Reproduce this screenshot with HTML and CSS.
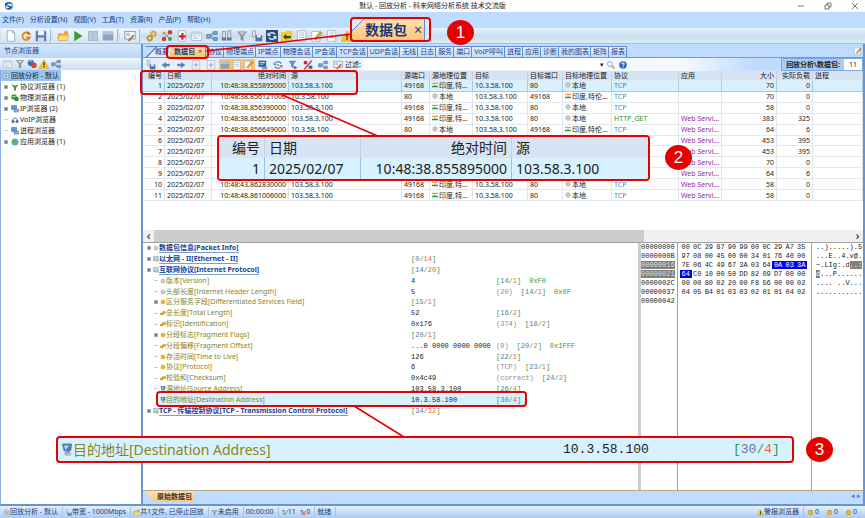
FILE: index.html
```html
<!DOCTYPE html>
<html lang="zh-CN">
<head>
    <meta charset="UTF-8">
    <meta name="viewport" content="width=device-width, initial-scale=1.0">
    <title>默认 - 回放分析 - 科来网络分析系统 技术交流版</title>
    <link rel="stylesheet" href="styles.css">
</head>
<body>
    <svg class="sprite" aria-hidden="true">
        <symbol id="i-logo" viewBox="0 0 16 16"><circle cx="8" cy="8" r="6" fill="#d9ebfa" stroke="#5f97d0" stroke-width="1.6"/><path d="M1 5c3-4 10-4 13 0-4-2-9-1-9 1s8 1 8 4-7 4-11 1c4 1 7 0 7-1S2 8 1 5z" fill="#1d559c"/></symbol>
        <symbol id="i-replay" viewBox="0 0 16 16"><circle cx="8" cy="8" r="6" fill="#c9def4" stroke="#6f9fd2" stroke-width="1.5"/><path d="M6 4l6 4-6 4z" fill="#e39a2c"/></symbol>
        <symbol id="i-new" viewBox="0 0 16 16"><path d="M3 1h7l3 3v11H3z" fill="#fff" stroke="#8a9bb0"/><path d="M10 1v3h3" fill="none" stroke="#8a9bb0"/></symbol>
        <symbol id="i-refresh" viewBox="0 0 16 16"><path d="M12 5a5 5 0 1 0 1 5H8" fill="none" stroke="#e08a1c" stroke-width="2.4"/><path d="M10 1l5 5h-5z" fill="#c65a10"/></symbol>
        <symbol id="i-save" viewBox="0 0 16 16"><path d="M1 1h13l1 2v12H1z" fill="#5b7fae"/><path d="M4 1h8v6H4z" fill="#f4f8fc"/><path d="M4 10h8v5H4z" fill="#cfdff0"/></symbol>
        <symbol id="i-folder" viewBox="0 0 16 16"><path d="M1 4h5l1 1h7v9H1z" fill="#e5b347"/><path d="M3 7h13l-3 7H1z" fill="#fbd97c" stroke="#c99432" stroke-width=".6"/><circle cx="12" cy="4" r="3" fill="#f1a13b"/></symbol>
        <symbol id="i-play" viewBox="0 0 16 16"><path d="M3 1l11 7-11 7z" fill="#3a9a3a"/></symbol>
        <symbol id="i-pause" viewBox="0 0 16 16"><path d="M2 2h5v12H2zM9 2h5v12H9z" fill="#b9cbde" stroke="#93a9c1"/></symbol>
        <symbol id="i-stop" viewBox="0 0 16 16"><path d="M1 2h14v12H1z" fill="#8ba3bf"/><path d="M1 2h14v4H1z" fill="#b4c6da"/></symbol>
        <symbol id="i-edit" viewBox="0 0 16 16"><path d="M1 2h14v10H1z" fill="#f3f6fa" stroke="#7a8797"/><path d="M3 4h5v4H3z" fill="#b9c7d8"/><path d="M5 14l7-8 2 2-7 7z" fill="#a8703c"/></symbol>
        <symbol id="i-gears" viewBox="0 0 16 16"><circle cx="10" cy="5" r="3" fill="none" stroke="#dda52b" stroke-width="2.6"/><circle cx="5" cy="11" r="3" fill="none" stroke="#c7912a" stroke-width="2.6"/></symbol>
        <symbol id="i-nodes" viewBox="0 0 16 16"><path d="M4 4l8 8M12 3l-9 10" stroke="#7a7a7a"/><circle cx="4" cy="4" r="2" fill="#e08c22"/><circle cx="12" cy="3" r="3" fill="#d43a2f"/><circle cx="4" cy="12" r="3" fill="#d43a2f"/><circle cx="12" cy="12" r="2.6" fill="#3f9b45"/></symbol>
        <symbol id="i-plus" viewBox="0 0 16 16"><path d="M3 1h10v14H3z" fill="#fff" stroke="#9aa9bb"/><path d="M7 4h3v3h3v3h-3v3H7v-3H4V7h3z" fill="#dd2222"/></symbol>
        <symbol id="i-window" viewBox="0 0 16 16"><path d="M1 3h13v11H1z" fill="#fafcff" stroke="#9badc2"/><path d="M1 3h13v3H1z" fill="#c4d3e4"/><path d="M3 8h4M3 11h7M9 8h3" stroke="#8fa3ba"/></symbol>
        <symbol id="i-tree" viewBox="0 0 16 16"><path d="M1 6h5v5H1zM10 2h5v4h-5zM10 10h5v4h-5z" fill="#7fa6d2" stroke="#53779f"/><path d="M6 8h2V4h2M8 8v4h2" fill="none" stroke="#53779f"/></symbol>
        <symbol id="i-tube" viewBox="0 0 16 16"><path d="M2 2h4v9H2zM9 1h4v11H9z" fill="#d8e1ea" stroke="#7c8da0"/><path d="M1 10h6v4H1zM8 10h6v4H8z" fill="#5e7a9c"/></symbol>
        <symbol id="i-funnel" viewBox="0 0 16 16"><path d="M1 2h14l-5 6v7l-4-2V8z" fill="#8b949e"/><path d="M4 3h8l-4 4z" fill="#c9ced4"/></symbol>
        <symbol id="i-disk" viewBox="0 0 16 16"><path d="M2 1h4v8H2z" fill="#e0e7ee" stroke="#8a98a8"/><path d="M6 7h9v8H6z" fill="#4f73a5"/><path d="M8 7h5v3H8z" fill="#eef3f8"/></symbol>
        <symbol id="i-sync" viewBox="0 0 16 16"><path d="M0 0h16v16H0z" fill="#2b4c7c"/><path d="M12 6a4.500 4.500 0 0 0-8 0M4 10a4.500 4.500 0 0 0 8 0" fill="none" stroke="#dfe9f5" stroke-width="2"/><path d="M2 3v5h5zM14 13V8H9z" fill="#dfe9f5"/></symbol>
        <symbol id="i-note" viewBox="0 0 16 16"><path d="M0 3h6l1-2h8v14H0z" fill="#f5cf1e"/><path d="M3 9l4-4v3h6v3H7v2z" fill="#283e5b"/></symbol>
        <symbol id="i-doc" viewBox="0 0 16 16"><path d="M2 1h11v14H2z" fill="#fff" stroke="#9dadbf"/><path d="M4 4h7M4 7h7M4 10h7" stroke="#8fa8c4"/></symbol>
        <symbol id="i-expand" viewBox="0 0 16 16"><path d="M2 1h12v14H2z" fill="#eef4fb" stroke="#9dadbf"/><path d="M8 4v8M4 8h8" stroke="#8fa8c4" stroke-width="1.5"/></symbol>
        <symbol id="i-pen" viewBox="0 0 16 16"><path d="M1 2h11v13H1z" fill="#fff" stroke="#9dadbf"/><path d="M4 12l8-10 3 2-8 9z" fill="#e0a146" stroke="#8c6a3b" stroke-width=".6"/></symbol>
        <symbol id="i-warn" viewBox="0 0 16 16"><path d="M8 1l8 14H0z" fill="#f8c51b" stroke="#c99110" stroke-width=".6"/><path d="M7 5h2v5H7zM7 11h2v2H7z" fill="#3b3000"/></symbol>
        <symbol id="i-left" viewBox="0 0 16 16"><path d="M1 8l7-5v3h6v4H8v3z" fill="#5f82b0"/></symbol>
        <symbol id="i-right" viewBox="0 0 16 16"><path d="M15 8L8 3v3H2v4h6v3z" fill="#5f82b0"/></symbol>
        <symbol id="i-screen" viewBox="0 0 16 16"><path d="M1 1h12v10H1z" fill="#2f5f9f"/><path d="M3 3h8v2H3zM3 7h6v1H3z" fill="#cfe0f3"/><path d="M6 11h9v4H6z" fill="#7c9cc4"/></symbol>
        <symbol id="i-swap" viewBox="0 0 16 16"><path d="M13 6a5 5 0 0 0-9-1M3 10a5 5 0 0 0 9 1" fill="none" stroke="#4c86c6" stroke-width="2"/><path d="M1 3v5h5zM15 13V8h-5z" fill="#4c86c6"/><circle cx="8" cy="8" r="2" fill="#e0a53a"/></symbol>
        <symbol id="i-filter" viewBox="0 0 16 16"><path d="M1 1h12L9 7v6L5 11V7z" fill="#5c93c9"/><path d="M9 9l6 3-5 3z" fill="#3c6a9e"/></symbol>
        <symbol id="i-ball" viewBox="0 0 16 16"><circle cx="6" cy="6" r="5" fill="#2f6dc0"/><circle cx="11" cy="10" r="4.500" fill="#d8472c"/><path d="M3 4q3-3 5 0" stroke="#cfe3fa" fill="none" stroke-width="1.500"/></symbol>
        <symbol id="i-percent" viewBox="0 0 16 16"><path d="M2 15L14 1" stroke="#d12626" stroke-width="2.400"/><circle cx="4" cy="4" r="3" fill="#d12626"/><path d="M9 9h6v5H9z" fill="#35619b"/></symbol>
        <symbol id="i-search" viewBox="0 0 16 16"><circle cx="6" cy="6" r="5" fill="#f4faff" stroke="#8199b3" stroke-width="1.600"/><path d="M10 10l5 5" stroke="#c98f2b" stroke-width="3"/></symbol>
        <symbol id="i-help" viewBox="0 0 16 16"><circle cx="8" cy="8" r="7.500" fill="#2d67b5"/><path d="M5.500 6q0-2.500 2.500-2.500t2.500 2.300Q10.500 7.500 8 9v1M8 11.500v2" fill="none" stroke="#fff" stroke-width="2"/></symbol>
        <symbol id="i-globe" viewBox="0 0 16 16"><circle cx="8" cy="8" r="7" fill="#5aa8dc"/><path d="M3 4q5-3 7 1t-3 4-5 1zM9 10l5-1-2 4z" fill="#69b04b"/></symbol>
        <symbol id="i-chat" viewBox="0 0 16 16"><circle cx="6" cy="6" r="5.500" fill="#3da03a"/><circle cx="11" cy="10" r="4.500" fill="#2f8a34"/><path d="M3 5h6" stroke="#d5f2cf" stroke-width="1.500"/></symbol>
        <symbol id="i-pc" viewBox="0 0 16 16"><path d="M1 1h10v8H1z" fill="#5d9bd8" stroke="#41658f"/><path d="M6 8h9v6H6z" fill="#8bb7e2" stroke="#41658f"/></symbol>
        <symbol id="i-phone" viewBox="0 0 16 16"><path d="M3 10a5 6 0 0 1 10 0" fill="none" stroke="#5d86b3" stroke-width="2"/><circle cx="4" cy="11" r="3" fill="#3c6ea8"/><circle cx="12" cy="11" r="3" fill="#3c6ea8"/></symbol>
        <symbol id="i-proto" viewBox="0 0 16 16"><path d="M1 2l5 3h4l5-3-3 6-2 1v6H6V9L4 8z" fill="#4d8f4d"/></symbol>
        <symbol id="i-india" viewBox="0 0 16 16"><path d="M0 2h16v4H0z" fill="#f39a3a"/><path d="M0 6h16v4H0z" fill="#fff"/><path d="M0 10h16v4H0z" fill="#2f9440"/><circle cx="8" cy="8" r="1.500" fill="#3553a0"/></symbol>
        <symbol id="i-local" viewBox="0 0 16 16"><circle cx="8" cy="8" r="6.500" fill="#d3d3d3" stroke="#9b9b9b"/><path d="M2 8h12M8 2v12" stroke="#a9a9a9"/></symbol>
        <symbol id="i-gray" viewBox="0 0 16 16"><circle cx="8" cy="8" r="5" fill="#d4d4d4" stroke="#8d8d8d" stroke-width="1.500"/></symbol>
        <symbol id="i-gold" viewBox="0 0 16 16"><circle cx="8" cy="8" r="5.500" fill="#f3b42b" stroke="#b37c12"/></symbol>
        <symbol id="i-key" viewBox="0 0 16 16"><path d="M1 8h7v5H1zM7 4h8v5H7z" fill="#e6ac2c" stroke="#a87a18"/></symbol>
        <symbol id="i-layer" viewBox="0 0 16 16"><path d="M1 1h13v12H1z" fill="#9cc3ee" stroke="#5f8ec4"/><path d="M3 4h9M3 7h9" stroke="#fff"/><path d="M9 9h6v6H9z" fill="#f0b93b"/></symbol>
        <symbol id="i-host" viewBox="0 0 16 16"><path d="M2 0h12l-1 9H4z" fill="#3d7cc4" stroke="#5c6f86"/><path d="M4 2h7L6 8z" fill="#bcdcf8"/><path d="M6 9h6l-1 3H6z" fill="#8795a8"/><path d="M4 12h9v3H6z" fill="#bfc9d5" stroke="#77879a" stroke-width=".6"/></symbol>
        <symbol id="i-check" viewBox="0 0 16 16"><path d="M1 2h9l-3 5v6L5 12V7z" fill="#8f9aa6"/><path d="M6 9l3 4 6-10" stroke="#3ba23b" stroke-width="2" fill="none"/></symbol>
        <symbol id="i-cross" viewBox="0 0 16 16"><path d="M1 2h9l-3 5v6L5 12V7z" fill="#8f9aa6"/><path d="M8 5l6 9M14 5l-6 9" stroke="#d9402e" stroke-width="2"/></symbol>
    </svg>

    <div class="app">
        <header class="titlebar">
            <svg class="logo"><use href="#i-logo"/></svg>
            <h1>默认 - 回放分析 - 科来网络分析系统 技术交流版</h1>
            <div class="window-buttons">
                <button aria-label="最小化"><svg viewBox="0 0 8 8"><path d="M1 4h6"/></svg></button>
                <button aria-label="还原"><svg viewBox="0 0 8 8"><path d="M1 3h4v4H1zM3 3V1h4v4H5"/></svg></button>
                <button aria-label="关闭"><svg viewBox="0 0 8 8"><path d="M1 1l6 6M7 1L1 7"/></svg></button>
            </div>
        </header>

        <nav class="menubar">
            <button>文件(F)</button>
            <button>分析设置(N)</button>
            <button>视图(V)</button>
            <button>工具(T)</button>
            <button>资源(R)</button>
            <button>产品(P)</button>
            <button>帮助(H)</button>
        </nav>

        <div class="toolbar" id="main-toolbar"></div>

        <main class="workspace">
            <aside class="sidebar">
                <h2>节点浏览器</h2>
                <div class="side-tools" id="side-tools"></div>
                <ul class="nodes" id="nodes"></ul>
            </aside>

            <section class="content">
                <div class="tabs" id="tabs"></div>

                <div class="packet-tools">
                    <div class="tool-list" id="packet-tools"></div>
                    <label for="filter">过滤:</label>
                    <input id="filter" type="text">
                    <button class="drop" aria-label="历史">▾</button>
                    <button class="tool" aria-label="搜索"><svg><use href="#i-search"/></svg></button>
                    <button class="tool" aria-label="说明"><svg><use href="#i-help"/></svg></button>
                    <div class="counter"><b>回放分析\数据包:</b><span>11</span></div>
                </div>

                <div class="packets">
                    <table>
                        <colgroup>
                            <col class="c-no"><col class="c-date"><col class="c-time"><col class="c-src"><col class="c-sport">
                            <col class="c-sgeo"><col class="c-dst"><col class="c-dport"><col class="c-dgeo"><col class="c-proto">
                            <col class="c-app"><col class="c-size"><col class="c-load"><col>
                        </colgroup>
                        <thead>
                            <tr>
                                <th class="num">编号</th><th>日期</th><th class="num">绝对时间</th><th>源</th><th>源端口</th>
                                <th>源地理位置</th><th>目标</th><th>目标端口</th><th>目标地理位置</th><th>协议</th>
                                <th>应用</th><th class="num">大小</th><th class="num">实际负载</th><th>进程</th>
                            </tr>
                        </thead>
                        <tbody id="packet-rows"></tbody>
                    </table>
                </div>
                <div class="scrollbar"><span>‹</span><i></i><span>›</span></div>

                <div class="detail">
                    <div class="fields" id="fields"></div>
                    <div class="hex" id="hex"></div>
                </div>

                <div class="bottom-tabs">
                    <button>原始数据包</button>
                    <span>◂ ▸</span>
                </div>
            </section>
        </main>

        <footer class="statusbar">
            <span><svg><use href="#i-replay"/></svg>回放分析 - 默认</span>
            <span><svg><use href="#i-disk"/></svg>带宽 - 1000Mbps</span>
            <span><svg><use href="#i-folder"/></svg>共1文件, 已停止回放</span>
            <span><svg><use href="#i-funnel"/></svg>未启用</span>
            <span>00:00:00</span>
            <span><svg><use href="#i-check"/></svg>11 &nbsp;<svg><use href="#i-cross"/></svg>0</span>
            <span>就绪</span>
            <span class="alarm"><svg><use href="#i-warn"/></svg>警报浏览器</span>
            <span class="level"><svg><use href="#i-gold"/></svg>0</span>
            <span class="level"><svg><use href="#i-gold"/></svg>0</span>
            <span class="level"><svg><use href="#i-gold"/></svg>0</span>
        </footer>
    </div>

    <!-- annotations over the window -->
    <div class="notes">
        <svg class="links" viewBox="0 0 865 518">
            <path d="M206 51L352 34M280 94L380 137M354 406L404 437"/>
        </svg>
        <div class="frame frame-tab"></div>
        <div class="frame frame-row"></div>
        <div class="frame frame-field"></div>

        <div class="frame zoom-tab"><b>数据包</b><span>×</span></div>
        <div class="frame zoom-row">
            <div class="zoom-head"><span>编号</span><span>日期</span><span>绝对时间</span><span>源</span></div>
            <div class="zoom-data"><span>1</span><span>2025/02/07</span><span>10:48:38.855895000</span><span>103.58.3.100</span></div>
        </div>
        <div class="frame zoom-field">
            <svg><use href="#i-host"/></svg>
            <span class="zoom-name">目的地址[Destination Address]</span>
            <span class="zoom-value">10.3.58.100</span>
            <span class="zoom-pos"><em>[</em>30<em>/</em><i>4</i><em>]</em></span>
        </div>

        <div class="badge badge-1">1</div>
        <div class="badge badge-2">2</div>
        <div class="badge badge-3">3</div>
    </div>

    <script>
        const byId = id => document.getElementById(id);
        const icon = name => `<svg><use href="#i-${name}"/></svg>`;
        const tool = name => `<button class="tool" aria-label="${name}">${icon(name)}</button>`;

        const mainGroups = [
            ['new', 'refresh', 'save'],
            ['folder', 'play', 'pause', 'stop'],
            ['edit'],
            ['gears', 'nodes', 'plus', 'window', 'tree', 'tube', 'funnel', 'disk', 'sync', 'note', 'doc', 'pen', 'doc', 'warn']
        ];
        byId('main-toolbar').innerHTML = mainGroups.map(g => `<div class="group">${g.map(tool).join('')}</div>`).join('');

        byId('side-tools').innerHTML = ['window', 'funnel', 'ball', 'warn', 'tree'].map(tool).join('');

        byId('packet-tools').innerHTML =
            ['disk', 'left', 'right', 'expand', 'expand'].map(tool).join('') +
            `<div class="pressed">${['stop', 'doc', 'pen'].map(tool).join('')}</div>` +
            ['screen', 'swap', 'filter', 'percent', 'tree', 'edit'].map(tool).join('');

        const nodes = [
            ['proto', '协议浏览器 (1)', true],
            ['chat', '物理浏览器 (1)', true],
            ['pc', 'IP浏览器 (2)', true],
            ['phone', 'VoIP浏览器', false],
            ['pc', '进程浏览器', false],
            ['globe', '应用浏览器 (1)', true]
        ];
        byId('nodes').innerHTML = `<li class="root">${icon('replay')}回放分析 - 默认</li>` +
            nodes.map(([i, text, open]) => `<li><i class="${open ? 'box' : 'dash'}"></i>${icon(i)}${text}</li>`).join('');

        const tabs = ['概要', '数据包', '协议', '物理端点', 'IP端点', '物理会话', 'IP会话', 'TCP会话', 'UDP会话', '无线', '日志',
            '服务', '端口', 'VoIP呼叫', '进程', '应用', '诊断', '我的图表', '矩阵', '报表'];
        byId('tabs').innerHTML = tabs.map((t, i) =>
            i === 1 ? `<button class="active">${t}<span>×</span></button>` : `<button>${t}</button>`
        ).join('') + icon('pen');

        // time, outgoing, protocol, size, payload
        const packets = [
            ['10:48:38.855895000', 1, 'TCP', 70, 0],
            ['10:48:38.856121000', 0, 'TCP', 70, 0],
            ['10:48:38.856390000', 1, 'TCP', 58, 0],
            ['10:48:38.856550000', 1, 'HTTP_GET', 383, 325],
            ['10:48:38.856649000', 0, 'TCP', 64, 6],
            ['', 0, '', 453, 395],
            ['', 0, '', 453, 395],
            ['', 0, '', 70, 0],
            ['', 0, '', 64, 6],
            ['10:48:43.862830000', 1, 'TCP', 58, 0],
            ['10:48:48.861006000', 1, 'TCP', 58, 0]
        ];
        const route = out => {
            const local = icon('local') + '本地';
            return out
                ? ['103.58.3.100', 49168, icon('india') + '印度,特...', '10.3.58.100', 80, local]
                : ['10.3.58.100', 80, local, '103.58.3.100', 49168, icon('india') + '印度,特伦...'];
        };
        byId('packet-rows').innerHTML = packets.map(([time, out, proto, size, load], i) => {
            const hosts = time ? route(out) : Array(6).fill('');
            return `<tr class="${i === 0 ? 'selected' : ''}">
                <td class="num">${i + 1}</td><td>2025/02/07</td><td class="num">${time}</td>
                ${hosts.map(h => `<td>${h}</td>`).join('')}
                <td class="${proto === 'TCP' ? 'tcp' : 'http'}">${proto}</td><td class="web">${i > 2 ? 'Web Servi...' : ''}</td>
                <td class="num">${size}</td><td class="num">${load}</td><td></td>
            </tr>`;
        }).join('');

        // level, icon, name, value, note, position, mask
        const fields = [
            [0, 'gray', '数据包信息[Packet Info]', '', '', '', '', 'box'],
            [0, 'layer', '以太网 - II[Ethernet - II]', '', '', '0/14', '', 'box'],
            [0, 'layer', '互联网协议[Internet Protocol]', '', '', '14/20', '', 'box'],
            [1, 'gray', '版本[Version]', '4', '', '14/1', '0xF0', 'dash'],
            [1, 'gray', '头部长度[Internet Header Length]', '5', '(20)', '14/1', '0x0F', 'dash'],
            [1, 'gold', '区分服务字段[Differentiated Services Field]', '', '', '15/1', '', 'box'],
            [1, 'key', '总长度[Total Length]', '52', '', '16/2', '', 'dash'],
            [1, 'key', '标识[Identification]', '0x176', '(374)', '18/2', '', 'dash'],
            [1, 'gold', '分段标志[Fragment Flags]', '', '', '20/1', '', 'box'],
            [1, 'key', '分段偏移[Fragment Offset]', '...0 0000 0000 0000', '(0)', '20/2', '0x1FFF', 'dash'],
            [1, 'gold', '存活时间[Time to Live]', '126', '', '22/1', '', 'dash'],
            [1, 'gold', '协议[Protocol]', '6', '(TCP)', '23/1', '', 'dash'],
            [1, 'key', '校验和[Checksum]', '0x4c49', '(correct)', '24/2', '', 'dash'],
            [1, 'host', '源地址[Source Address]', '103.58.3.100', '', '26/4', '', 'dash'],
            [1, 'host', '目的地址[Destination Address]', '10.3.58.100', '', '30/4', '', 'dash'],
            [0, 'layer', 'TCP - 传输控制协议[TCP - Transmission Control Protocol]', '', '', '34/32', '', 'box']
        ];
        const position = p => {
            if (!p) return '';
            const [from, len] = p.split('/');
            return `<span class="pos"><em>[</em>${from}<em>/</em><i>${len}</i><em>]</em></span>`;
        };
        byId('fields').innerHTML = fields.map(([level, ic, name, value, note, pos, mask, mark], i) => `
            <div class="field level-${level} ${i === 14 ? 'selected' : ''}">
                <span class="name"><i class="${mark}"></i>${icon(ic)}<a href="#fields">${name}</a></span>
                <span class="value">${value || position(pos)}</span>
                <span class="extra">${note ? `<span class="gray">${note}</span>` : ''}${value ? position(pos) : ''}${mask ? `<em>${mask}</em>` : ''}</span>
            </div>`).join('');

        const dump = [
            ['00000000', '00 0C 29 87 90 99 00 0C 29 A7 35', '..).....).5'],
            ['0000000B', '97 08 00 45 00 00 34 01 76 40 00', '...E..4.v@.'],
            ['00000016', '7E 06 4C 49 67 3A 03 64 0A 03 3A', '~.LIg:.d..:'],
            ['00000021', '64 C0 10 00 50 DD 82 09 D7 00 00', 'd...P......'],
            ['0000002C', '00 00 80 02 20 00 F8 56 00 00 02', '.... ..V...'],
            ['00000037', '04 05 B4 01 03 03 02 01 01 04 02', '...........'],
            ['00000042', '', '']
        ];
        const marked = n => n >= 30 && n <= 33;
        byId('hex').innerHTML =
            `<div class="offsets">${dump.map((r, i) => `<span class="${i === 2 || i === 3 ? 'on' : ''}">${r[0]}</span>`).join('')}</div>` +
            `<div class="bytes">${dump.map((r, i) => r[1] ? r[1].split(' ').map((b, j) =>
                `<span class="${marked(i * 11 + j) ? 'on' : ''}">${b}</span>`).join('') : '').join('')}</div>` +
            `<div class="ascii">${dump.map((r, i) => `<p>${[...r[2]].map((c, j) =>
                marked(i * 11 + j) ? `<span class="on">${c}</span>` : c).join('')}</p>`).join('')}</div>`;
    </script>
</body>
</html>
```
FILE: styles.css
```css
* {
    box-sizing: border-box;
}
body {
    margin: 0;
    font-family: "Noto Sans", "Noto Sans CJK SC", sans-serif;
    font-size: 7px;
    line-height: 10px;
    color: #222;
    background: #bfdbff;
}
button, input {
    font: inherit;
    color: inherit;
    margin: 0;
    padding: 0;
    border: 0;
    background: none;
}
h1, h2, p, ul {
    margin: 0;
    padding: 0;
    font-size: 7px;
    font-weight: normal;
}
svg {
    width: 8px;
    height: 8px;
    flex: none;
}
em, i {
    font-style: normal;
}
.sprite {
    position: absolute;
    width: 0;
    height: 0;
}
.app {
    height: 100vh;
    display: flex;
    flex-direction: column;
    overflow: hidden;
}

/* title, menu and toolbar */
.titlebar {
    height: 12px;
    display: grid;
    grid-template-columns: 1fr auto 1fr;
    align-items: center;
    padding: 0 4px;
    background: #fff;
}
.titlebar .logo {
    width: 10px;
    height: 10px;
}
.window-buttons {
    display: flex;
    justify-content: flex-end;
    gap: 19px;
    padding-right: 2px;
}
.window-buttons button {
    display: flex;
}
.window-buttons path {
    fill: none;
    stroke: #555;
    stroke-width: 0.8;
}
.menubar {
    height: 16px;
    display: flex;
    align-items: center;
    gap: 6px;
    padding: 0 2px;
    color: #1c3f7c;
    background: #bfdbff;
}
.toolbar {
    height: 16px;
    display: flex;
    gap: 2px;
    padding: 0 1px;
    border-top: 1px solid #e6f1fc;
    border-bottom: 1px solid #9fc0e4;
    background: linear-gradient(#e4f0fb, #c9ddef 50%, #dcecf9);
}
.group {
    display: flex;
    align-items: center;
    padding: 0 2px;
    border-right: 1px solid #9dbfe6;
    background: linear-gradient(#eef5fc, #d4e4f4);
}
.group:last-child {
    flex: 1;
    border: 0;
    background: none;
}
.tool {
    width: 12px;
    height: 12px;
    display: flex;
    align-items: center;
    justify-content: center;
}
.group .tool {
    width: 15px;
}
.group svg {
    width: 12px;
    height: 12px;
}

/* sidebar */
.workspace {
    flex: 1;
    min-height: 0;
    display: grid;
    grid-template-columns: 143px 1fr;
}
.sidebar {
    display: flex;
    flex-direction: column;
    border-right: 2px solid #6a94d0;
    border-bottom: 2px solid #6a94d0;
}
.sidebar h2 {
    height: 14px;
    padding-left: 4px;
    line-height: 14px;
    color: #1f437d;
    background: linear-gradient(#d5e7fc, #bad6f8);
}
.side-tools {
    height: 12px;
    display: flex;
    align-items: center;
    padding-left: 2px;
    background: linear-gradient(#f0f6fd, #c8dcf4);
}
.side-tools svg {
    width: 10px;
    height: 10px;
}
.nodes {
    flex: 1;
    list-style: none;
    border-left: 1px solid #86ace0;
    background: #fff;
}
.nodes li {
    display: flex;
    align-items: center;
    gap: 1px;
    height: 11px;
    padding-left: 3px;
}
.nodes .root {
    width: 60px;
    padding-left: 1px;
    background: #98c3f4;
    white-space: nowrap;
}
.box, .dash {
    width: 4px;
    height: 4px;
    margin-right: 2px;
    flex: none;
    border: 1px solid #aab1b9;
    background: #6d747c;
}
.dash {
    height: 1px;
    border-width: 1px 0 0;
    border-color: #ccc;
}

/* tabs and packet toolbar */
.content {
    min-width: 0;
    display: flex;
    flex-direction: column;
    border-right: 2px solid #6a94d0;
    border-bottom: 2px solid #6a94d0;
}
.tabs {
    height: 14px;
    display: flex;
    align-items: flex-end;
    padding: 0 1px 0 3px;
    border-bottom: 1px solid #6f9bd6;
    background: #bfdbff;
}
.tabs button {
    height: 11px;
    padding: 0 1px 0 2px;
    border: 1px solid #5f8ccc;
    border-width: 1px 1px 0 0;
    color: #1c3f7c;
    background: linear-gradient(#e6f1ff, #c2dbfa);
    white-space: nowrap;
}
.tabs button:first-child {
    padding-left: 9px;
    background: linear-gradient(135deg, #bfdbff 7px, #5f8ccc 7px, #5f8ccc 8px, #deebfc 8px);
    border-width: 1px 0 0;
}
.tabs .active {
    padding: 0 3px 0 4px;
    font-weight: bold;
    background: linear-gradient(#ffe0a8, #fdc06a);
}
.tabs .active span {
    padding-left: 3px;
    font-weight: normal;
}
.tabs svg {
    margin-left: auto;
    margin-bottom: 2px;
}
.packet-tools {
    height: 13px;
    display: flex;
    align-items: center;
    background: linear-gradient(90deg, #e3effc, #f4f9ff 75%, #bfdbff 85%);
}
.tool-list {
    display: flex;
    align-items: center;
    gap: 1px;
    margin-left: 1px;
}
.tool-list .tool {
    width: 14px;
}
.tool-list svg {
    width: 10px;
    height: 10px;
}
.tool-list .pressed {
    display: flex;
    background: #fbc268;
}
.pressed .tool {
    width: 12px;
}
.packet-tools input {
    width: 236px;
    height: 11px;
    margin-left: 2px;
    background: #fff;
}
.drop {
    width: 6px;
    line-height: 8px;
    background: #fff;
}
.counter {
    display: flex;
    margin-left: auto;
    line-height: 11px;
    border: 1px solid #7ea7de;
    background: #a9cbf5;
}
.counter b {
    padding: 0 4px;
}
.counter span {
    width: 18px;
    text-align: center;
    background: #fff;
}

/* packet list */
.packets {
    height: 159px;
    flex: none;
    overflow: hidden;
    background: #fff;
}
.packets table {
    width: 100%;
    height: 130px;
    table-layout: fixed;
    border-collapse: separate;
    border-spacing: 0;
}
.packets th, .packets td {
    height: 10px;
    padding: 0 2px;
    line-height: 9px;
    text-align: left;
    font-weight: normal;
    white-space: nowrap;
    overflow: hidden;
    border-right: 1px solid #dfe6ee;
    border-bottom: 1px solid #e3e9f0;
}
.packets th {
    background: #d6e3f3;
    border-right-color: #c3d2e4;
}
.packets .num {
    text-align: right;
}
.packets td svg {
    width: 6px;
    height: 6px;
    margin-right: 1px;
}
.packets .selected td {
    background: #d8f1ff;
    border-color: #9ccbee;
}
.packets .tcp {
    color: #1e90d6;
}
.packets .http {
    color: #2c8a1c;
}
.packets .web {
    color: #94299b;
}
.c-no { width: 22px; }
.c-date { width: 47px; }
.c-time { width: 77px; }
.c-src { width: 113px; }
.c-sport { width: 28px; }
.c-sgeo { width: 43px; }
.c-dst { width: 55px; }
.c-dport { width: 35px; }
.c-dgeo { width: 49px; }
.c-proto { width: 67px; }
.c-app { width: 43px; }
.c-size { width: 55px; }
.c-load { width: 36px; }

.scrollbar {
    height: 12px;
    flex: none;
    display: flex;
    align-items: center;
    background: #f0f0f0;
    font-size: 12px;
}
.scrollbar span {
    width: 11px;
    text-align: center;
}
.scrollbar i {
    width: 68%;
    height: 12px;
    margin-right: auto;
    background: #cdcdcd;
}

/* decoded fields and hex dump */
.detail {
    flex: 1;
    min-height: 0;
    display: grid;
    grid-template-columns: 1fr 225px;
    border-top: 1px solid #a0a0a0;
    border-bottom: 1px solid #b9a98c;
    background: #fff;
}
.fields {
    height: 173px;
    display: grid;
    grid-template-rows: repeat(16, 1fr);
    font-family: "Liberation Mono", monospace;
}
.field {
    display: grid;
    grid-template-columns: 264px 85px 1fr;
    align-items: center;
    padding-left: 4px;
    line-height: 10px;
    white-space: nowrap;
}
.name {
    display: flex;
    align-items: center;
    font-family: "Noto Sans", "Noto Sans CJK SC", sans-serif;
}
.name svg {
    width: 6px;
    height: 6px;
}
.name a {
    color: #8a8420;
    text-decoration: none;
}
.level-1 .name {
    padding-left: 7px;
}
.level-0 .name a {
    line-height: 9px;
    font-weight: bold;
    color: #123f92;
    border-bottom: 1px solid #7f9ed0;
}
.field.selected {
    margin-left: 17px;
    margin-right: 112px;
    padding-left: 0;
    grid-template-columns: 251px 85px 1fr;
    background: #d8f1ff;
}
.field.selected .name {
    padding-left: 0;
}
.field.selected .dash {
    display: none;
}
.extra {
    display: flex;
    gap: 8px;
}
.pos, .zoom-pos {
    color: #5a76a8;
}
.pos i, .zoom-pos i {
    color: #f2603a;
}
.fields em, .zoom-pos em {
    color: #2a9d3a;
}
.gray {
    color: #8c8c8c;
}
.hex {
    display: grid;
    grid-template-columns: 37px 134px 1fr;
    border-left: 3px solid #cdcdcd;
    font-family: "Liberation Mono", monospace;
    line-height: 8px;
}
.offsets, .bytes {
    border-right: 1px solid #9a9ad8;
}
.offsets, .bytes, .ascii {
    display: grid;
    grid-template-rows: repeat(7, 8px);
    row-gap: 1px;
    align-content: start;
}
.offsets .on {
    margin-right: 2px;
    color: #ddd;
    background: #808080;
}
.bytes {
    grid-template-columns: repeat(11, 1fr);
    padding: 0 4px 0 2px;
    text-align: center;
}
.bytes .on {
    color: #fff;
    background: #0000f5;
}
.ascii {
    padding-left: 4px;
    white-space: pre;
}
.ascii .on {
    color: #fff;
    background: #808080;
}
.bottom-tabs {
    height: 13px;
    flex: none;
    display: flex;
    justify-content: space-between;
    padding-right: 2px;
    color: #4a76b8;
    background: #bfdbff;
}
.bottom-tabs button {
    height: 11px;
    padding: 0 2px 0 12px;
    margin-left: 2px;
    font-weight: bold;
    color: #333;
    background: linear-gradient(#ffe0a8, #fdc878);
    clip-path: polygon(0 0, 100% 0, 100% 100%, 10px 100%);
}

/* status bar */
.statusbar {
    height: 12px;
    flex: none;
    display: flex;
    align-items: center;
    gap: 1px;
    padding: 0 4px 0 2px;
    color: #1f3d70;
    background: linear-gradient(#e3f0ff, #a9ccf7);
    white-space: nowrap;
}
.statusbar span {
    display: flex;
    align-items: center;
    padding: 0 4px 0 1px;
    border-right: 1px solid #a3c2e8;
}
.statusbar svg {
    width: 7px;
    height: 7px;
}
.statusbar .alarm {
    margin-left: auto;
}
.statusbar .level {
    padding: 0 4px 0 2px;
    border: 0;
    gap: 1px;
}

/* annotations */
.notes {
    position: absolute;
    top: 0;
    left: 0;
    width: 865px;
    height: 518px;
    overflow: hidden;
    pointer-events: none;
}
.links {
    width: 100%;
    height: 100%;
    fill: none;
    stroke: #e60000;
    stroke-width: 1.5;
}
.frame {
    position: absolute;
    border: 2px solid #e60000;
    border-radius: 4px;
    overflow: hidden;
}
.frame-tab {
    left: 166px;
    top: 45px;
    width: 43px;
    height: 14px;
}
.frame-row {
    left: 140px;
    top: 70px;
    width: 218px;
    height: 25px;
}
.frame-field {
    left: 156px;
    top: 391px;
    width: 371px;
    height: 16px;
}
.zoom-tab {
    left: 350px;
    top: 17px;
    width: 81px;
    height: 25px;
    display: flex;
    align-items: center;
    gap: 7px;
    padding-left: 13px;
    font-size: 14px;
    color: #1b3a78;
    background:
        linear-gradient(135deg, #dcebfc 8px, #5f8ccc 8px, #5f8ccc 9px, transparent 9px),
        linear-gradient(90deg, transparent 72px, #5f8ccc 72px, #5f8ccc 73px, #dcebfc 73px),
        linear-gradient(#ffe3b4, #fdc47a);
}
.zoom-row {
    left: 217px;
    top: 135px;
    width: 433px;
    height: 46px;
    font-size: 14px;
    line-height: 21px;
}
.zoom-head, .zoom-data {
    display: grid;
    grid-template-columns: 46px 96px 151px 1fr;
    background: #d8e4f3;
}
.zoom-data {
    background: #d8f1ff;
}
.zoom-row span {
    padding: 0 4px;
    border-right: 1px solid #9cc4e8;
}
.zoom-head span {
    border-color: #c3d2e4;
}
.zoom-row span:nth-child(odd) {
    text-align: right;
}
.zoom-row span:last-child {
    border: 0;
}
.zoom-field {
    left: 56px;
    top: 436px;
    width: 738px;
    height: 27px;
    display: grid;
    grid-template-columns: 12px 490px 170px 1fr;
    align-items: center;
    padding-left: 3px;
    font-size: 14px;
    line-height: 20px;
    background: #d8f1ff;
}
.zoom-field svg {
    width: 12px;
    height: 14px;
}
.zoom-name {
    color: #8a8420;
}
.zoom-value, .zoom-pos {
    font-family: "Liberation Mono", monospace;
    font-size: 13px;
}
.badge {
    position: absolute;
    width: 27px;
    height: 25px;
    border-radius: 50%;
    font-family: "Liberation Sans", sans-serif;
    font-size: 17px;
    line-height: 25px;
    text-align: center;
    color: #fff;
    background: #e60000;
}
.badge-1 {
    left: 447px;
    top: 20px;
}
.badge-2 {
    left: 665px;
    top: 145px;
}
.badge-3 {
    left: 806px;
    top: 437px;
}
```
